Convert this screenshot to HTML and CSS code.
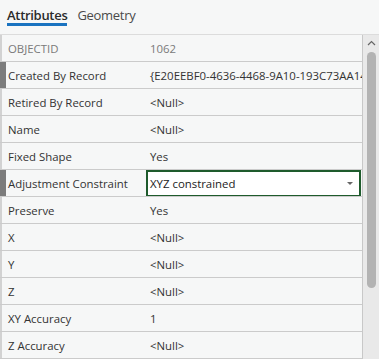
FILE: index.html
```html
<!DOCTYPE html>
<html>
<head>
<meta charset="utf-8">
<link rel="stylesheet" href="styles.css">
</head>
<body>
<div class="pane">
  <div class="tabs">
    <div class="tab active">Attributes</div>
    <div class="tab">Geometry</div>
  </div>
  <div class="body">
    <div class="table">
      <div class="row ro"><div class="lbl">OBJECTID</div><div class="val">1062</div></div>
      <div class="row sel"><div class="lbl">Created By Record</div><div class="val">{E20EEBF0-4636-4468-9A10-193C73AA14</div></div>
      <div class="row"><div class="lbl">Retired By Record</div><div class="val">&lt;Null&gt;</div></div>
      <div class="row"><div class="lbl">Name</div><div class="val">&lt;Null&gt;</div></div>
      <div class="row"><div class="lbl">Fixed Shape</div><div class="val">Yes</div></div>
      <div class="row sel"><div class="lbl">Adjustment Constraint</div><div class="val"><div class="combo"><span>XYZ constrained</span><span class="caret"></span></div></div></div>
      <div class="row"><div class="lbl">Preserve</div><div class="val">Yes</div></div>
      <div class="row"><div class="lbl">X</div><div class="val">&lt;Null&gt;</div></div>
      <div class="row"><div class="lbl">Y</div><div class="val">&lt;Null&gt;</div></div>
      <div class="row"><div class="lbl">Z</div><div class="val">&lt;Null&gt;</div></div>
      <div class="row"><div class="lbl">XY Accuracy</div><div class="val">1</div></div>
      <div class="row"><div class="lbl">Z Accuracy</div><div class="val">&lt;Null&gt;</div></div>
    </div>
    <div class="scroll">
      <svg class="up" width="9" height="6" viewBox="0 0 9 6"><path d="M1 5 L4.5 1.5 L8 5" fill="none" stroke="#666" stroke-width="1.2"/></svg>
      <div class="thumb"></div>
    </div>
  </div>
</div>
</body>
</html>
```

FILE: styles.css
```css
html, body {
  margin: 0;
  padding: 0;
  background: #f6f7f7;
}
body {
  font-family: "Open Sans", "Noto Sans", sans-serif;
  color: #333;
  width: 379px;
  height: 359px;
  overflow: hidden;
}
.tabs {
  display: flex;
  gap: 10px;
  padding-left: 7px;
  border-bottom: 1px solid #dcdcdc;
  box-sizing: border-box;
  height: 35px;
}
.tab {
  font-size: 13px;
  padding-top: 6px;
  height: 28px;
  box-sizing: border-box;
  color: #4a4a4a;
  letter-spacing: -0.3px;
}
.tab.active {
  color: #2b2b2b;
  font-weight: 600;
  border-bottom: 3px solid #1a73c0;
  height: 26px;
}
.body {
  display: flex;
}
.table {
  width: 363px;
  border-right: 1px solid #c8c8c8;
  box-sizing: border-box;
}
.row {
  display: flex;
  height: 27px;
  border-bottom: 1px solid #cbcbcb;
  box-sizing: border-box;
  font-size: 11.4px;
  align-items: center;
}
.lbl {
  width: 146px;
  flex: none;
  height: 100%;
  display: flex;
  align-items: center;
  padding-left: 6px;
  border-left: 2px solid #d2d2d2;
  box-sizing: border-box;
}
.row.sel .lbl {
  border-left: 6px solid #7c7c7c;
  padding-left: 2px;
}
.val {
  flex: 1;
  height: 100%;
  display: flex;
  align-items: center;
  padding-left: 4px;
  white-space: nowrap;
  overflow: hidden;
}
.row.ro {
  color: #7a7a7a;
}
.combo {
  margin-left: -4px;
  width: 215px;
  height: 27px;
  border: 2px solid #1e5b2c;
  background: #fff;
  box-sizing: border-box;
  display: flex;
  align-items: center;
  justify-content: space-between;
  padding: 0 6px 0 2px;
  color: #222;
}
.caret {
  width: 0;
  height: 0;
  border-left: 3px solid transparent;
  border-right: 3px solid transparent;
  border-top: 3px solid #666;
}
.scroll {
  width: 16px;
  height: 324px;
  background: #e9e9e9;
  display: flex;
  flex-direction: column;
  align-items: center;
}
.up {
  margin-top: 5px;
  margin-left: 1px;
}
.thumb {
  margin-top: 6px;
  width: 9px;
  height: 236px;
  border-radius: 5px;
  background: #b3b3b3;
  margin-left: 1px;
}
```
